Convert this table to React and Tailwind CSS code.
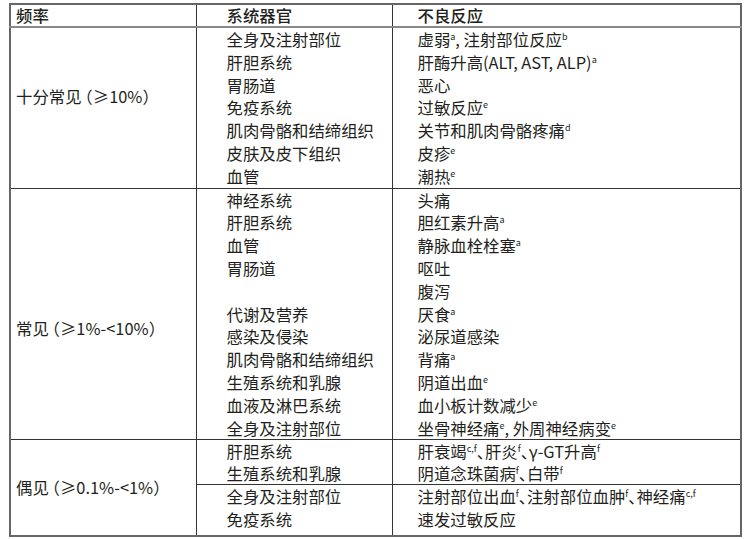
import React from 'react';

const S = ({ children }) => <sup className="text-[9px] -top-[6px]">{children}</sup>;

const groups = [
    {
        name: '十分常见',
        range: '（≥10%）',
        pad: 'align-top pt-[56px]',
        parts: [
            {
                organs: ['全身及注射部位', '肝胆系统', '胃肠道', '免疫系统', '肌肉骨骼和结缔组织', '皮肤及皮下组织', '血管'],
                effects: [
                    <>虚弱<S>a</S>, 注射部位反应<S>b</S></>,
                    <>肝酶升高(ALT, AST, ALP)<S>a</S></>,
                    <>恶心</>,
                    <>过敏反应<S>e</S></>,
                    <>关节和肌肉骨骼疼痛<S>d</S></>,
                    <>皮疹<S>e</S></>,
                    <>潮热<S>e</S></>,
                ],
            },
        ],
    },
    {
        name: '常见',
        range: '（≥1%-<10%）',
        pad: 'align-top pt-[127px]',
        parts: [
            {
                organs: ['神经系统', '肝胆系统', '血管', '胃肠道', '', '代谢及营养', '感染及侵染', '肌肉骨骼和结缔组织', '生殖系统和乳腺', '血液及淋巴系统', '全身及注射部位'],
                effects: [
                    <>头痛</>,
                    <>胆红素升高<S>a</S></>,
                    <>静脉血栓栓塞<S>a</S></>,
                    <>呕吐</>,
                    <>腹泻</>,
                    <>厌食<S>a</S></>,
                    <>泌尿道感染</>,
                    <>背痛<S>a</S></>,
                    <>阴道出血<S>e</S></>,
                    <>血小板计数减少<S>e</S></>,
                    <>坐骨神经痛<S>e</S>, 外周神经病变<S>e</S></>,
                ],
            },
        ],
    },
    {
        name: '偶见',
        range: '（≥0.1%-<1%）',
        pad: 'align-middle',
        parts: [
            {
                organs: ['肝胆系统', '生殖系统和乳腺'],
                effects: [
                    <>肝衰竭<S>c,f</S>、肝炎<S>f</S>、γ-GT升高<S>f</S></>,
                    <>阴道念珠菌病<S>f</S>、白带<S>f</S></>,
                ],
                line: 'h-[22px] leading-[22px]',
            },
            {
                organs: ['全身及注射部位', '免疫系统'],
                effects: [
                    <>注射部位出血<S>f</S>、注射部位血肿<S>f</S>、神经痛<S>c,f</S></>,
                    <>速发过敏反应</>,
                ],
                extra: 'pb-[4px]',
            },
        ],
    },
];

function Lines({ items, line }) {
    return (
        <div className="flex flex-col">
            {items.map((t, i) => (
                <div key={i} className={`whitespace-nowrap ${line || 'h-[22.8px] leading-[22.8px]'}`}>{t || '\u00a0'}</div>
            ))}
        </div>
    );
}

function App() {
    return (
        <div className="w-[755px] h-[539px] bg-white pt-[3px] pl-[9px] text-[#231f20] text-[16.4px] font-['Noto_Sans_CJK_SC','Noto_Sans',sans-serif]">
            <table className="border-collapse w-[733px] border-2 border-[#666] table-fixed">
                <colgroup>
                    <col className="w-[186px]" />
                    <col className="w-[196px]" />
                    <col />
                </colgroup>
                <thead>
                    <tr className="border-b-2 border-[#888] h-[21px]">
                        <th className="text-left font-medium pl-[5px] border-r border-[#333] leading-[21px] p-0">频率</th>
                        <th className="text-left font-medium pl-[30px] border-r border-[#333] leading-[21px] p-0">系统器官</th>
                        <th className="text-left font-medium pl-[25px] leading-[21px] p-0">不良反应</th>
                    </tr>
                </thead>
                <tbody>
                    {groups.map((g, gi) =>
                        g.parts.map((p, pi) => (
                            <tr key={gi + '-' + pi} className="border-b border-[#333]">
                                {pi === 0 && (
                                    <td rowSpan={g.parts.length} className={`pl-[5px] border-r border-[#333] whitespace-nowrap [font-feature-settings:'halt'] ${g.pad}`}>
                                        <span className="leading-[22.8px]">
                                            {g.name}
                                            <span className="pl-[3px]">{g.range}</span>
                                        </span>
                                    </td>
                                )}
                                <td className={`pl-[30px] border-r border-[#333] align-top ${p.extra || ''}`}>
                                    <Lines items={p.organs} line={p.line} />
                                </td>
                                <td className={`pl-[25px] align-top [font-feature-settings:'halt'] ${p.extra || ''}`}>
                                    <Lines items={p.effects} line={p.line} />
                                </td>
                            </tr>
                        ))
                    )}
                </tbody>
            </table>
        </div>
    );
}

export default App;
